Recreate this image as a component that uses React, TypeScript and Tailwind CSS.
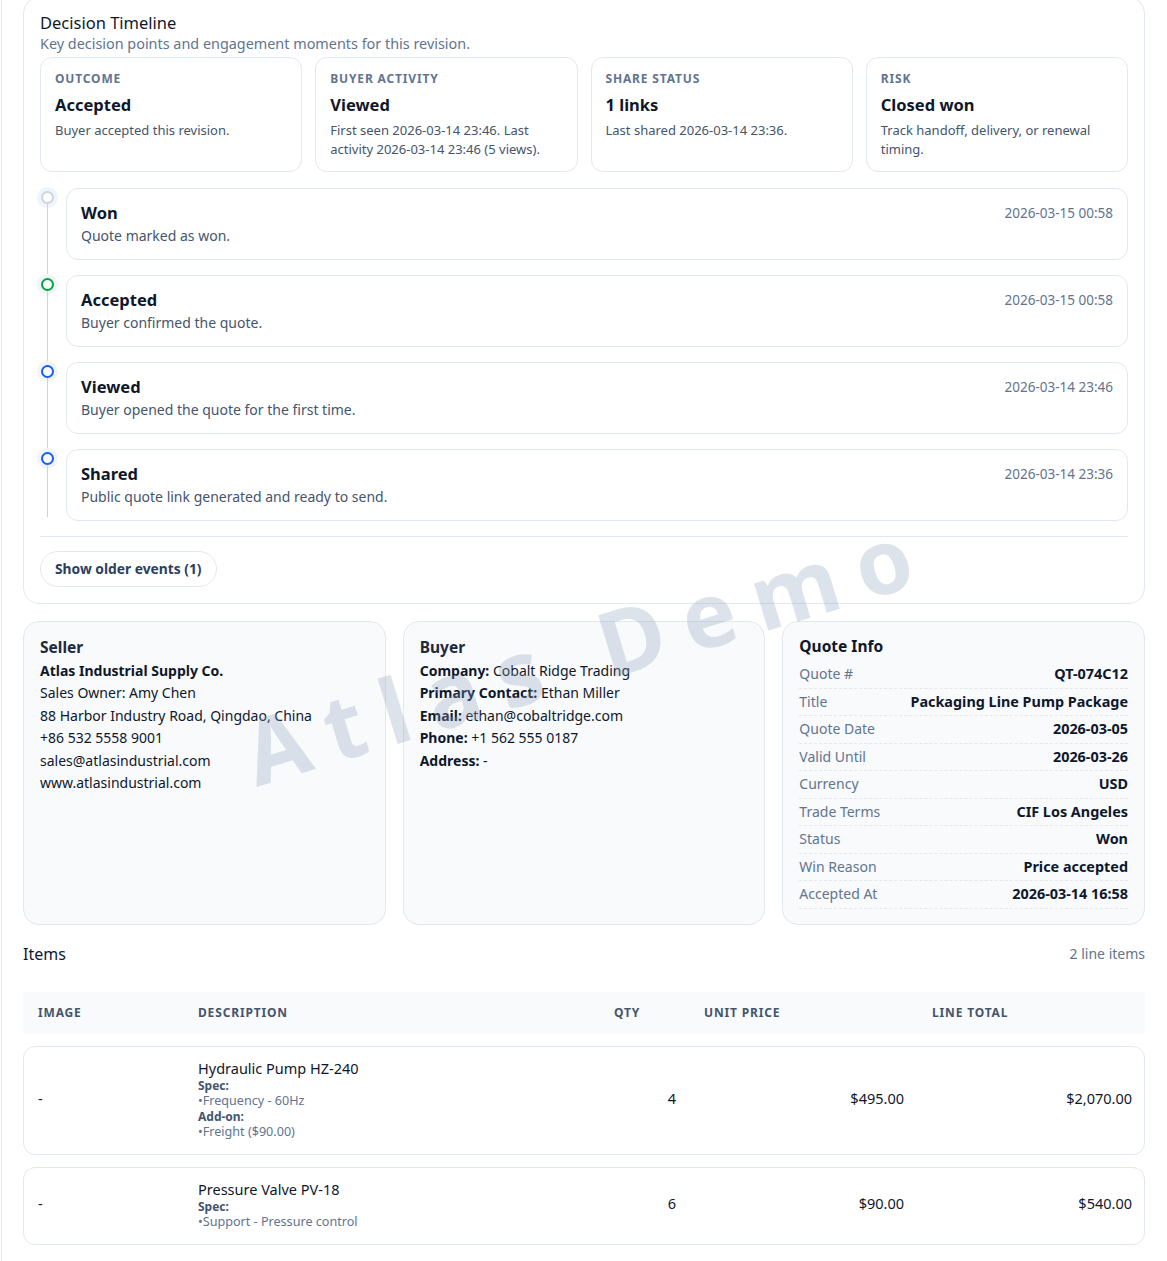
const summary = [
  { label: 'Outcome', value: 'Accepted', desc: 'Buyer accepted this revision.' },
  {
    label: 'Buyer Activity',
    value: 'Viewed',
    desc: 'First seen 2026-03-14 23:46. Last activity 2026-03-14 23:46 (5 views).',
  },
  { label: 'Share Status', value: '1 links', desc: 'Last shared 2026-03-14 23:36.' },
  { label: 'Risk', value: 'Closed won', desc: 'Track handoff, delivery, or renewal timing.' },
];

const events = [
  { title: 'Won', desc: 'Quote marked as won.', at: '2026-03-15 00:58', dot: 'border-slate-300' },
  { title: 'Accepted', desc: 'Buyer confirmed the quote.', at: '2026-03-15 00:58', dot: 'border-green-600' },
  { title: 'Viewed', desc: 'Buyer opened the quote for the first time.', at: '2026-03-14 23:46', dot: 'border-blue-600' },
  { title: 'Shared', desc: 'Public quote link generated and ready to send.', at: '2026-03-14 23:36', dot: 'border-blue-600' },
];

const quoteInfo = [
  ['Quote #', 'QT-074C12'],
  ['Title', 'Packaging Line Pump Package'],
  ['Quote Date', '2026-03-05'],
  ['Valid Until', '2026-03-26'],
  ['Currency', 'USD'],
  ['Trade Terms', 'CIF Los Angeles'],
  ['Status', 'Won'],
  ['Win Reason', 'Price accepted'],
  ['Accepted At', '2026-03-14 16:58'],
];

const items = [
  {
    name: 'Hydraulic Pump HZ-240',
    groups: [
      { label: 'Spec:', lines: ['Frequency - 60Hz'] },
      { label: 'Add-on:', lines: ['Freight ($90.00)'] },
    ],
    qty: 4,
    unit: '$495.00',
    total: '$2,070.00',
  },
  {
    name: 'Pressure Valve PV-18',
    groups: [{ label: 'Spec:', lines: ['Support - Pressure control'] }],
    qty: 6,
    unit: '$90.00',
    total: '$540.00',
  },
];

const cols = 'grid grid-cols-[160px_416px_91px_228px_227px]';

function Timeline() {
  return (
    <section className="-mt-[3px] rounded-[16px] border border-slate-200 bg-white px-[16px] pt-[14px] pb-[16px]">
      <h2 className="text-[16.5px] leading-[22px] text-slate-900">Decision Timeline</h2>
      <p className="text-[14.4px] leading-[20px] text-slate-500">
        Key decision points and engagement moments for this revision.
      </p>
      <div className="mt-[3px] grid grid-cols-4 gap-[13px]">
        {summary.map((s) => (
          <div key={s.label} className="rounded-[12px] border border-slate-200 px-[14px] pt-[14px] pb-[12px]">
            <div className="text-[12px] font-bold uppercase leading-[14px] tracking-[0.07em] text-slate-500">
              {s.label}
            </div>
            <div className="mt-[7px] text-[16.5px] font-bold leading-[24px] text-slate-900">{s.value}</div>
            <div className="mt-[4px] text-[13px] leading-[19px] text-slate-600">{s.desc}</div>
          </div>
        ))}
      </div>
      <div className="mt-[16px]">
        {events.map((e, i) => {
          const last = i === events.length - 1;
          return (
            <div key={e.title} className={`flex gap-3 ${last ? '' : 'pb-[15px]'}`}>
              <div className="flex w-[14px] shrink-0 flex-col items-center">
                <div
                  className={`mt-[3px] h-[13px] w-[13px] shrink-0 rounded-full border-2 bg-white ring-[4px] ring-slate-100 ${e.dot}`}
                />
                <div className={`w-px flex-1 bg-slate-300 ${last ? 'mb-[4px]' : '-mb-[19px]'}`} />
              </div>
              <div className="flex flex-1 items-start justify-between rounded-[12px] border border-slate-200 bg-white px-[14px] py-[13px]">
                <div>
                  <div className="text-[16.5px] font-bold leading-[22px] text-slate-900">{e.title}</div>
                  <div className="mt-[2px] text-[14px] leading-[20px] text-slate-600">{e.desc}</div>
                </div>
                <div className="text-[13.5px] leading-[22px] text-slate-500">{e.at}</div>
              </div>
            </div>
          );
        })}
      </div>
      <div className="mt-[15px] border-t border-slate-200 pt-[14px]">
        <button className="h-[36px] rounded-full border border-slate-200 bg-white px-[14px] text-[13.8px] font-bold text-[#2a3f5f]">
          Show older events (1)
        </button>
      </div>
    </section>
  );
}

function InfoCards() {
  return (
    <div className="mt-[17px] grid grid-cols-3 gap-[17px]">
      <div className="rounded-[16px] border border-slate-200 bg-slate-50 px-[16px] pt-[14px] pb-[15px] text-[14px] leading-[22.4px] text-slate-900">
        <h3 className="text-[15.5px] font-bold leading-[22px] text-slate-800">Seller</h3>
        <div className="mt-[2px] font-bold">Atlas Industrial Supply Co.</div>
        <div>Sales Owner: Amy Chen</div>
        <div>88 Harbor Industry Road, Qingdao, China</div>
        <div>+86 532 5558 9001</div>
        <div>sales@atlasindustrial.com</div>
        <div>www.atlasindustrial.com</div>
      </div>
      <div className="rounded-[16px] border border-slate-200 bg-slate-50 px-[16px] pt-[14px] pb-[15px] text-[14px] leading-[22.4px] text-slate-900">
        <h3 className="text-[15.5px] font-bold leading-[22px] text-slate-800">Buyer</h3>
        <div className="mt-[2px]">
          <b>Company:</b> Cobalt Ridge Trading
        </div>
        <div>
          <b>Primary Contact:</b> Ethan Miller
        </div>
        <div>
          <b>Email:</b> ethan@cobaltridge.com
        </div>
        <div>
          <b>Phone:</b> +1 562 555 0187
        </div>
        <div>
          <b>Address:</b> -
        </div>
      </div>
      <div className="rounded-[16px] border border-slate-200 bg-slate-50 px-[16px] pt-[13px] pb-[15px]">
        <h3 className="text-[15.5px] font-bold leading-[22px] text-slate-900">Quote Info</h3>
        <div className="mt-[4px]">
          {quoteInfo.map(([k, v]) => (
            <div
              key={k}
              className="flex items-center justify-between border-b border-dashed border-slate-200 py-[3px] leading-[20.5px]"
            >
              <span className="text-[14px] text-slate-500">{k}</span>
              <span className="text-[14.4px] font-bold text-slate-900">{v}</span>
            </div>
          ))}
        </div>
      </div>
    </div>
  );
}

function Items() {
  return (
    <section className="mt-[17px]">
      <div className="flex items-center justify-between">
        <h2 className="text-[16px] leading-[24px] text-slate-900">Items</h2>
        <span className="text-[14px] text-slate-500">2 line items</span>
      </div>
      <div className={`${cols} mt-[26px] h-[42px] items-center bg-slate-50 text-[12px] font-bold uppercase tracking-[0.07em] text-slate-600`}>
        <div className="px-[15px]">Image</div>
        <div className="px-[15px]">Description</div>
        <div className="px-[15px]">Qty</div>
        <div className="px-[14px]">Unit Price</div>
        <div className="px-[14px]">Line Total</div>
      </div>
      <div className="mt-[12px] flex flex-col gap-[12px]">
        {items.map((it) => (
          <div
            key={it.name}
            className={`${cols} items-center rounded-[12px] border border-slate-200 bg-white pt-[11px] pb-[14px] text-[14.5px] text-slate-900`}
          >
            <div className="pr-[15px] pl-[14px]">-</div>
            <div className="pr-[15px] pl-[14px]">
              <div className="leading-[20px]">{it.name}</div>
              {it.groups.map((g) => (
                <div key={g.label} className="text-[12px] leading-[15.5px]">
                  <div className="font-bold text-slate-600">{g.label}</div>
                  {g.lines.map((l) => (
                    <div key={l} className="text-[12.6px] text-slate-500">
                      •{l}
                    </div>
                  ))}
                </div>
              ))}
            </div>
            <div className="px-[15px] text-right">{it.qty}</div>
            <div className="px-[15px] text-right">{it.unit}</div>
            <div className="px-[14px] text-right">{it.total}</div>
          </div>
        ))}
      </div>
    </section>
  );
}

export default function App() {
  return (
    <div
      className="relative ml-px min-h-[1261px] overflow-hidden border-l border-slate-200 bg-white pr-[22px] pl-[21px]"
      style={{ fontFamily: '"Noto Sans", "Open Sans", sans-serif' }}
    >
      <Timeline />
      <InfoCards />
      <Items />
      <div className="pointer-events-none absolute top-[650px] left-[585px] -translate-x-1/2 -translate-y-1/2 -rotate-[17deg] whitespace-nowrap text-[90px] font-bold tracking-[0.22em] text-slate-400/30">
        Atlas Demo
      </div>
    </div>
  );
}
